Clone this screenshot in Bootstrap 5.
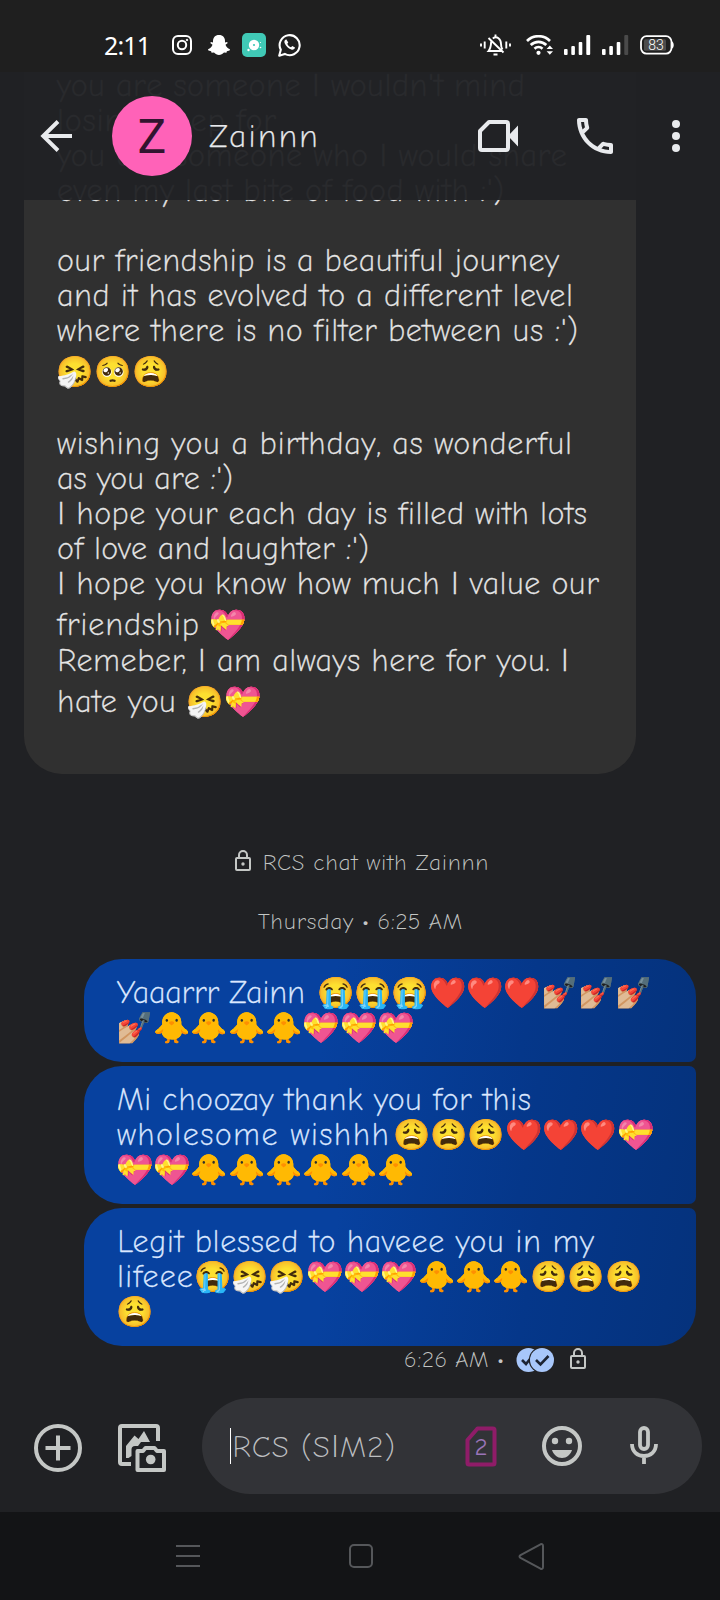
<!DOCTYPE html>
<html lang="en">
<head>
<meta charset="utf-8">
<meta name="viewport" content="width=device-width, initial-scale=1">
<title>Zainnn</title>
<link href="https://cdn.jsdelivr.net/npm/bootstrap@5.3.0/dist/css/bootstrap.min.css" rel="stylesheet">
<style>
  body { background: #202124; color: #e3e3e3; font-family: "Comic Neue", Lato, "Open Sans", sans-serif; font-weight: 300; overflow: hidden; }
  svg { display: block; flex: none; }
  .phone { width: 720px; height: 1600px; }
  .statusbar { height: 72px; background: #1f1f1f; color: #fff; padding: 18px 46px 0 104px; z-index: 3; }
  .clock { font-family: "Noto Sans", "Open Sans", sans-serif; font-weight: 400; font-size: 25px; line-height: 30px; width: 68px; }
  .apps { gap: 12px; }
  .signals { gap: 11px; }
  .topbar { height: 128px; background: rgba(32, 33, 37, .955); margin-bottom: -128px; z-index: 2; color: #e8eaed; padding: 0 40px; }
  .avatar { width: 80px; height: 80px; background: #ff62b8; color: #33142f; font-family: Roboto, sans-serif; font-weight: 400; font-size: 48px; line-height: 82px; margin-left: 40px; }
  .who { font-size: 33px; line-height: 40px; margin-left: 17px; -webkit-text-stroke: .25px; }
  .actions { gap: 59px; }
  .thread { height: 1308px; }
  .ln { height: 35px; font-size: 31.5px; line-height: 35px; white-space: pre; display: flex; -webkit-text-stroke: .3px; }
  .ln.tall { height: 42.6px; padding-top: 6px; }
  .emo { font-family: "Noto Color Emoji", sans-serif; font-size: 30px; line-height: 35px; font-weight: 400; margin-left: -1px; margin-top: -1px; }
  .incoming .emo { letter-spacing: .6px; }
  .emo.after { margin-left: 10px; }
  .outgoing .emo.after { margin-left: 12px; }
  .emo.tight { margin-left: 4px; }
  .emo.snug { margin-left: 1px; }
  .bar-i { font-family: Lato, sans-serif; line-height: 1; }
  .incoming { width: 612px; height: 706px; margin: -4px 0 0 24px; background: #303030; border-radius: 0 0 38px 38px; padding: 1px 0 0 33px; color: #e6e6e6; flex: none; }
  .meta { font-size: 23px; line-height: 28px; color: #c4c7c5; white-space: pre; }
  .encrypted { margin-top: 75px; padding-left: 4px; gap: 11px; }
  .encrypted svg { margin-top: -6px; }
  .day { margin-top: 31px; }
  .outgoing { width: 612px; margin: 0 0 4px 84px; padding: 17px 0 0 33px; color: #dce8ff; flex: none; background: linear-gradient(100deg, #07419f 40%, #05378a 72%, #05327c 100%); }
  .o1 { height: 103px; border-radius: 38px 38px 7px 38px; margin-top: 23px; }
  .o2 { height: 138px; border-radius: 38px 7px 7px 38px; }
  .o3 { height: 138px; border-radius: 38px 7px 38px 38px; margin-bottom: 0; }
  .receipt { padding-left: 404px; }
  .receipt svg:nth-of-type(1) { margin-left: 12px; }
  .receipt svg:nth-of-type(2) { margin: -3px 0 0 15px; }
  .composer { height: 132px; color: #c4c7c5; padding: 0 18px 0 34px; }
  .tools { gap: 36px; padding-top: 4px; }
  .field { width: 500px; height: 96px; border-radius: 48px; background: #323337; padding-left: 28px; }
  .caret { width: 1px; height: 36px; background: #fff; }
  .hint { font-size: 31px; line-height: 40px; color: #bdbfc1; white-space: pre; width: 234px; padding: 2px 0 0 1px; }
  .sim { font-size: 25px; font-weight: 400; fill: #9a74b8; }
  .face { margin-left: 45px; }
  .mic { margin: -2px 0 0 48px; }
  .navkeys { height: 88px; background: #131416; color: #55575a; padding: 0 175px 0 176px; }
</style>
</head>
<body>
<div class="phone d-flex flex-column overflow-hidden">

  <header class="statusbar d-flex align-items-center flex-shrink-0 position-relative">
    <span class="clock"><span data-w="47">2:11</span></span>
    <div class="apps d-flex align-items-center">
      <!-- camera -->
      <svg width="20" height="20" viewBox="0 0 20 20" fill="none" stroke="#fff" stroke-width="2"><rect x="1" y="1" width="18" height="18" rx="5"/><circle cx="10" cy="10" r="4.2"/><circle cx="15" cy="5" r=".8" fill="#fff" stroke-width="1"/></svg>
      <!-- ghost -->
      <svg class="ms-1 me-n1" width="22" height="20" viewBox="0 0 22 20" fill="#fff"><path d="M11 0c4 0 6 2.700 6 6v1.500l2-.5.8 1-2.300 1.700c.8 2.300 2.200 3.700 4.500 4.600l-.4 1.200-2.700.7-.5 1.500-2.400-.2C14.500 19 13 20 11 20s-3.500-1-5-2.500l-2.400.2-.5-1.500L.4 15.500 0 14.300c2.300-.9 3.700-2.300 4.500-4.600L2.200 8 3 7l2 .5V6c0-3.300 2-6 6-6z"/></svg>
      <!-- recorder tile -->
      <svg width="24" height="24" viewBox="0 0 24 24"><rect width="24" height="24" rx="5" fill="#40c9b6"/><g fill="#fff"><circle cx="12" cy="12" r="5.200"/><circle cx="6.500" cy="17" r="1.200"/><circle cx="18.500" cy="9.500" r=".6"/><circle cx="18.500" cy="14.500" r=".8"/></g><circle cx="12" cy="12" r="1.100" fill="#40c9b6"/></svg>
      <!-- phone bubble -->
      <svg width="23" height="24" viewBox="0 0 23 24"><path d="M1.200 22.700l1.600-5.900A10 10 0 1 1 6.800 20.900z" fill="none" stroke="#fff" stroke-width="2.100" stroke-linejoin="round"/><path d="M8.200 6.300c-1.600.6-2.300 2.200-1.500 4 1.300 3 3.300 5.100 6.600 6.200 1.700.6 3.400-.3 3.700-2l-2.700-1.500-1.300 1.300c-1.700-.7-3-2-3.700-3.600l1-1.200z" fill="#fff"/></svg>
    </div>

    <div class="signals d-flex align-items-center ms-auto">
      <!-- vibrate, bell muted -->
      <svg width="31" height="22" viewBox="0 0 31 22" fill="none" stroke="#fff" stroke-width="1.900"><path d="M1 9.500v3M4.700 7.500v7M26.300 7.500v7M30 9.500v3"/><path d="M11.200 7.500C11 11 11 14 8.500 17H21.500M12.800 4.500C17 1.500 21 5 21 10c0 2 .5 4 1.500 5.500M15.500 .5v2.500M13.500 20.500h4M8.500 4l15 14.500"/></svg>
      <!-- wifi -->
      <svg class="ms-1" width="27" height="20" viewBox="0 0 27 20" fill="none" stroke="#fff" stroke-width="2.700"><path d="M1 6C7.500-.4 17.500-.4 24 6M4.700 10c4.400-4.300 11.200-4.300 15.600 0M8.500 13.700c2.300-2.200 5.700-2.200 8 0"/><circle cx="12.500" cy="17.800" r="2.100" fill="#fff" stroke="none"/><path d="M20.600 14l3.200-3.500L27 14zM20.600 16.200l3.200 3.500 3.200-3.500z" fill="#fff" stroke="none"/></svg>
      <!-- signal bars -->
      <svg width="27" height="20" viewBox="0 0 27 20" fill="#fff"><rect x="0" y="14" width="3.600" height="6" rx="1"/><rect x="7.300" y="11" width="3.600" height="9" rx="1"/><rect x="14.700" y="7" width="3.600" height="13" rx="1"/><rect x="22.300" y="0" width="3.900" height="20" rx="1"/></svg>
      <svg width="27" height="20" viewBox="0 0 27 20" fill="#fff"><rect x="0" y="14" width="3.600" height="6" rx="1"/><rect x="7.300" y="11" width="3.600" height="9" rx="1"/><rect x="14.700" y="7" width="3.600" height="13" rx="1"/><rect x="22.300" y="0" width="3.900" height="20" rx="1" fill="#4a4a4a"/></svg>
      <!-- battery -->
      <svg width="34" height="20" viewBox="0 0 34 20"><rect x="1" y="1.200" width="30.500" height="17.400" rx="5.500" fill="none" stroke="#fff" stroke-width="1.800"/><rect x="4" y="4.200" width="22" height="11.500" rx="1.500" fill="#4c4c4c"/><path d="M32 6.500c2.300 1 2.300 6 0 7z" fill="#fff"/><text x="16" y="15" text-anchor="middle" font-family="Roboto" font-size="14" font-weight="300" fill="#fff">83</text></svg>
    </div>
  </header>

  <nav class="topbar d-flex align-items-center flex-shrink-0 position-relative">
    <svg width="32" height="32" viewBox="0 0 32 32" fill="none" stroke="currentColor" stroke-width="3.900"><path d="M32 16H3M18 1.500L3.200 16 18 30.500"/></svg>
    <div class="avatar rounded-circle text-center flex-shrink-0">Z</div>
    <div class="who"><span data-w="109">Zainnn</span></div>
    <div class="actions d-flex align-items-center ms-auto">
      <svg width="40" height="32" viewBox="0 0 40 32"><path d="M11 2h17q2 0 2 2v24q0 2-2 2H4q-2 0-2-2V11z" fill="none" stroke="currentColor" stroke-width="4" stroke-linejoin="round"/><path d="M30 16L40 5.500v21z" fill="currentColor"/></svg>
      <svg width="36" height="36" viewBox="3 3 18 18" fill="currentColor"><path d="M6.540 5c.06.890.210 1.760.450 2.590l-1.200 1.200c-.410-1.200-.670-2.470-.760-3.790h1.510m9.860 12.020c.850.240 1.720.390 2.600.450v1.490c-1.320-.090-2.590-.350-3.800-.750l1.200-1.190M7.500 3H4c-.55 0-1 .450-1 1 0 9.390 7.610 17 17 17 .55 0 1-.450 1-1v-3.490c0-.550-.450-1-1-1-1.240 0-2.450-.200-3.570-.570-.100-.040-.210-.050-.310-.050-.260 0-.510.100-.710.290l-2.200 2.200c-2.830-1.450-5.150-3.760-6.590-6.590l2.200-2.200c.280-.280.360-.670.250-1.020C8.700 6.450 8.500 5.250 8.500 4c0-.550-.450-1-1-1z"/></svg>
      <svg width="8" height="32" viewBox="0 0 8 32" fill="currentColor"><circle cx="4" cy="4" r="4"/><circle cx="4" cy="16" r="4"/><circle cx="4" cy="28" r="4"/></svg>
    </div>
  </nav>

  <main class="thread d-flex flex-column flex-shrink-0">
    <section class="incoming">
      <div class="ln"><span data-w="468">you are someone <span class="bar-i">I</span> wouldn't mind</span></div>
      <div class="ln"><span data-w="219">losing sleep for</span></div>
      <div class="ln"><span data-w="510">you are someone who <span class="bar-i">I</span> would share</span></div>
      <div class="ln"><span data-w="447">even my last bite of food with :')</span></div>
      <div class="ln"></div>
      <div class="ln"><span data-w="502">our friendship is a beautiful journey</span></div>
      <div class="ln"><span data-w="516">and it has evolved to a different level</span></div>
      <div class="ln"><span data-w="521">where there is no filter between us :')</span></div>
      <div class="ln tall"><span class="emo">🤧🥺😩</span></div>
      <div class="ln"></div>
      <div class="ln"><span data-w="515">wishing you a birthday, as wonderful</span></div>
      <div class="ln"><span data-w="176">as you are :')</span></div>
      <div class="ln"><span data-w="530"><span class="bar-i">I</span> hope your each day is filled with lots</span></div>
      <div class="ln"><span data-w="312">of love and laughter :')</span></div>
      <div class="ln"><span data-w="542"><span class="bar-i">I</span> hope you know how much <span class="bar-i">I</span> value our</span></div>
      <div class="ln tall"><span data-w="142">friendship</span><span class="emo after">💝</span></div>
      <div class="ln"><span data-w="512">Remeber, <span class="bar-i">I</span> am always here for you. <span class="bar-i">I</span></span></div>
      <div class="ln tall"><span data-w="119">hate you</span><span class="emo after">🤧💝</span></div>
    </section>

    <div class="meta encrypted d-flex justify-content-center align-items-center"><svg width="16" height="21" viewBox="0 0 16 21" fill="none" stroke="currentColor" stroke-width="2"><rect x="1" y="8" width="14" height="12" rx="1"/><path d="M4 8V5a4 4 0 0 1 8 0v3"/><circle cx="8" cy="14" r="1.700" fill="currentColor" stroke="none"/></svg><span data-w="226">RCS chat with Zainnn</span></div>
    <div class="meta day text-center"><span data-w="204">Thursday • 6:25 AM</span></div>

    <section class="outgoing o1">
      <div class="ln"><span data-w="188">Yaaarrr Zainn</span><span class="emo after">😭😭😭❤️❤️❤️💅🏼💅🏼💅🏼</span></div>
      <div class="ln"><span class="emo">💅🏼🐥🐥🐥🐥💝💝💝</span></div>
    </section>
    <section class="outgoing o2">
      <div class="ln"><span data-w="414">Mi choozay thank you for this</span></div>
      <div class="ln"><span data-w="272">wholesome wishhh</span><span class="emo tight">😩😩😩❤️❤️❤️💝</span></div>
      <div class="ln"><span class="emo">💝💝🐥🐥🐥🐥🐥🐥</span></div>
    </section>
    <section class="outgoing o3">
      <div class="ln"><span data-w="477">Legit blessed to haveee you in my</span></div>
      <div class="ln"><span data-w="76">lifeee</span><span class="emo snug">😭🤧🤧💝💝💝🐥🐥🐥😩😩😩</span></div>
      <div class="ln"><span class="emo">😩</span></div>
    </section>
    <div class="meta receipt d-flex align-items-center"><span data-w="100">6:26 AM •</span><svg width="39" height="26" viewBox="0 0 39 26"><circle cx="12.500" cy="13" r="12" fill="#a8c7fa"/><path d="M6 13l4 4 4-5" fill="none" stroke="#1d2433" stroke-width="2.600"/><circle cx="26" cy="13" r="13.200" fill="#202124"/><circle cx="26" cy="13" r="12" fill="#a8c7fa"/><path d="M20 13l4.500 4.500 8-8.500" fill="none" stroke="#1d2433" stroke-width="2.600"/></svg><svg width="16" height="21" viewBox="0 0 16 21" fill="none" stroke="currentColor" stroke-width="2"><rect x="1" y="8" width="14" height="12" rx="1"/><path d="M4 8V5a4 4 0 0 1 8 0v3"/><circle cx="8" cy="14" r="1.700" fill="currentColor" stroke="none"/></svg></div>
  </main>

  <footer class="composer d-flex align-items-center flex-shrink-0">
    <div class="tools d-flex align-items-center">
      <svg width="48" height="48" viewBox="0 0 48 48" fill="none" stroke="currentColor" stroke-width="4"><circle cx="24" cy="24" r="22"/><path d="M24 11.500v25M11.500 24h25"/></svg>
      <svg width="48" height="48" viewBox="0 0 48 48"><path d="M40 17V4q0-2-2-2H4Q2 2 2 4v34q0 2 2 2h9" fill="none" stroke="currentColor" stroke-width="4"/><path d="M8 34V22l8.500-10.500 4 3.500L26 7l6 11h-9l-3 4h-3q-3.500 0-3.500 3.500V32l-3 2z" fill="currentColor"/><path d="M19.500 27h5.500l2.500-3h9l2.500 3h7v19H19.500z" fill="none" stroke="currentColor" stroke-width="4" stroke-linejoin="round"/><circle cx="32.700" cy="35.500" r="4.800" fill="currentColor"/></svg>
    </div>
    <div class="field ms-auto d-flex align-items-center">
      <div class="caret"></div>
      <div class="hint"><span data-w="163">RCS (S<span class="bar-i">I</span>M2)</span></div>
      <svg width="32" height="41" viewBox="0 0 32 41"><path d="M12.500 2.500H28q1.500 0 1.500 1.500v33q0 1.500-1.500 1.500H4q-1.500 0-1.500-1.500V14z" fill="none" stroke="#8f1c68" stroke-width="4" stroke-linejoin="round"/><text class="sim" x="16" y="29" text-anchor="middle">2</text></svg>
      <svg class="face" width="40" height="40" viewBox="0 0 40 40" fill="currentColor"><circle cx="20" cy="20" r="18" fill="none" stroke="currentColor" stroke-width="4"/><circle cx="13" cy="15" r="3.200"/><circle cx="27" cy="15" r="3.200"/><path d="M10 24h20c-1.500 4.500-5.300 8-10 8s-8.500-3.500-10-8z"/></svg>
      <svg class="mic" width="28" height="38" viewBox="0 0 28 38" fill="none" stroke="currentColor" stroke-width="3.800"><rect x="10" y="2" width="8" height="21" rx="4"/><path d="M2 18c0 7.500 5.300 12 12 12s12-4.500 12-12M14 30v8"/></svg>
    </div>
  </footer>

  <div class="navkeys d-flex align-items-center justify-content-between flex-shrink-0">
    <svg width="24" height="24" viewBox="0 0 24 24" stroke="currentColor" stroke-width="2"><path d="M0 2h24M0 12h24M0 22h24"/></svg>
    <svg class="ms-1" width="24" height="24" viewBox="0 0 24 24" fill="none" stroke="currentColor" stroke-width="2"><rect x="1" y="1" width="22" height="22" rx="4"/></svg>
    <svg width="27" height="27" viewBox="0 0 27 27" fill="none" stroke="currentColor" stroke-width="2" stroke-linejoin="round"><path d="M2.500 12.200L22.500 1.300q2.500-.8 2.500 1.700v21q0 2.500-2.500 1.700L2.500 14.800q-2-1.300 0-2.600z"/></svg>
  </div>
</div>

<script src="https://cdn.jsdelivr.net/npm/bootstrap@5.3.0/dist/js/bootstrap.bundle.min.js"></script>
<script>
  // Track each run of text so that it fills its measured line width.
  document.querySelectorAll('[data-w]').forEach(function (el) {
    el.style.display = 'inline-block';
    el.style.whiteSpace = 'pre';
    el.style.fontVariantLigatures = 'none';
    var n = Array.from(el.textContent).length;
    var gap = (el.dataset.w - el.getBoundingClientRect().width) / (n - 1);
    el.style.letterSpacing = gap.toFixed(3) + 'px';
    el.style.marginRight = (-gap).toFixed(3) + 'px';
  });
</script>
</body>
</html>
